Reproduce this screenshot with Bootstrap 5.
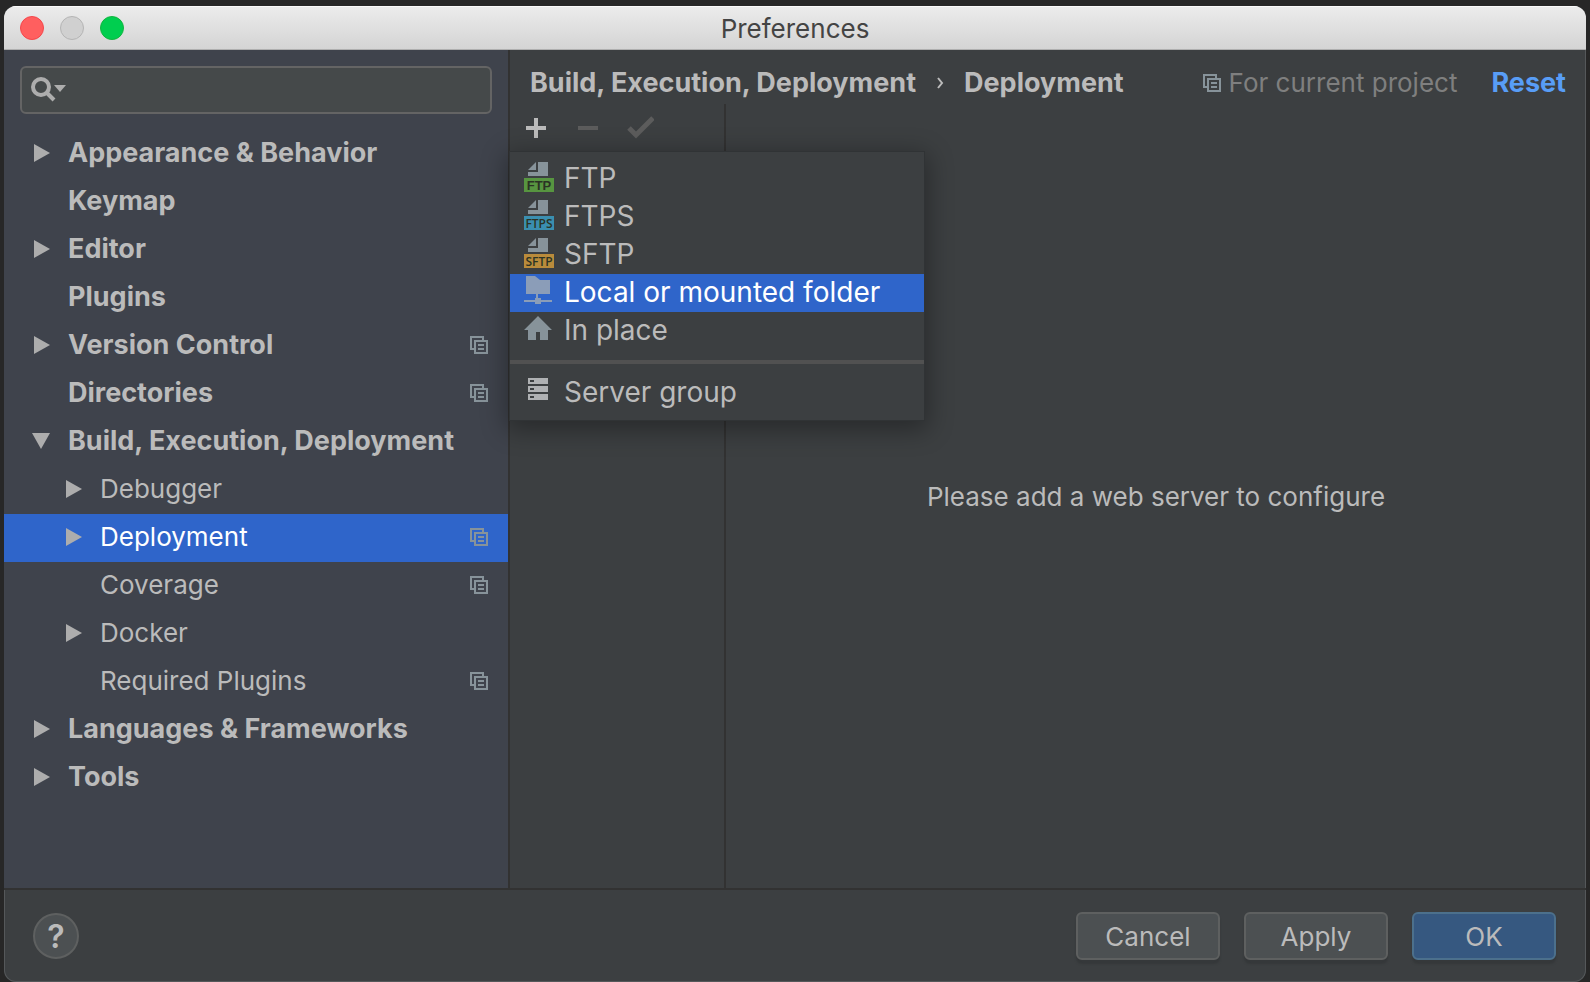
<!DOCTYPE html>
<html lang="en" data-bs-theme="dark">
<head>
<meta charset="utf-8">
<meta name="viewport" content="width=device-width, initial-scale=1">
<title>Preferences</title>
<link href="https://cdn.jsdelivr.net/npm/bootstrap@5.3.0/dist/css/bootstrap.min.css" rel="stylesheet">
<style>
  body { background: #272727; color: #bbb; font-family: Inter, "Liberation Sans", sans-serif; font-size: 26px; line-height: 32px; padding: 6px 4px 0; }
  a { color: inherit; text-decoration: none; }
  svg { display: block; flex: none; }
  .strong { font-size: 27px; font-weight: 700; }
  .window { min-height: calc(100vh - 6px); background: #3c3f41; border-radius: 12px; overflow: hidden; box-shadow: inset 0 0 0 1px #55585a; }
  .titlebar { height: 44px; padding: 0 16px; background: linear-gradient(#ececec, #d4d4d4); border-bottom: 1px solid #afafaf; box-shadow: inset 0 1px #fafafa; color: #444; line-height: 34px; }
  .lights { flex: 1 1 0; gap: 16px; }
  .light { width: 24px; height: 24px; border-radius: 50%; border: 1px solid #b4b4b4; background: #d0d0d0; padding: 0; }
  .light-close { background: #ff5f5f; border-color: #f4474b; }
  .light-zoom { background: #00ce4f; border-color: #12b53f; }
  .heading { padding-top: 2px; }
  .sidebar { width: 506px; background: #3f434c; border-right: 2px solid #323232; }
  .search { margin: 16px; height: 48px; border: 2px solid #646464; border-radius: 6px; background: #45494a; padding-left: 9px; }
  .search input { background: none; border: 0; outline: 0; color: #bbb; min-width: 0; }
  .tree a { height: 48px; padding: 0 20px 2px 24px; }
  .tree .twisty { width: 24px; margin-right: 16px; }
  .tree .child { padding-left: 56px; }
  .tree .active { background: #2f65ca; color: #fff; }
  .crumbs { height: 54px; padding: 12px 20px 0; }
  .muted-note { color: #7f7f7f; gap: 8px; margin-right: 34px; }
  .reset { color: #589df6; }
  .servers { width: 216px; border-right: 2px solid #323232; }
  .tool { background: none; border: 0; padding: 0; width: 52px; height: 48px; display: flex; align-items: center; justify-content: center; }
  .popup { top: 48px; left: 0; width: 414px; padding: 8px 0; background: #3c3f41; box-shadow: 0 0 0 1px #303335, 0 6px 24px 4px #0005; z-index: 5; font-size: 28px; line-height: 36px; }
  .popup button { background: none; border: 0; color: #bbb; padding: 0 14px 2px; height: 38px; gap: 10px; }
  .popup .active { background: #2f65ca; color: #fff; }
  .popup hr { margin: 10px 0; border: 0; height: 4px; background: #515151; opacity: 1; }
  .tag-text { font: 700 13px "Liberation Sans", sans-serif; fill: #2b3324; text-anchor: middle; }
  .tag-long { font: 600 12px "Open Sans", sans-serif; }
  .footer { border-top: 2px solid #323232; padding: 22px 30px 22px 29px; }
  .help { width: 46px; height: 46px; border-radius: 50%; background: #4c5052; border: 2px solid #5e6060; color: #bbb; font-size: 32px; font-weight: 600; padding: 2px 0 0; }
  .action { width: 144px; height: 48px; padding: 2px 0 0; border: 2px solid #5e6060; border-radius: 6px; background: #4c5052; color: #bbb; font-size: 26px; line-height: 32px; box-shadow: 0 4px 2px #35383a; }
  .action-main { background: #365880; border-color: #4c708c; }
  .notice { padding-top: 2px; }
</style>
</head>
<body>
<svg class="d-none">
  <symbol id="right" viewBox="0 0 24 24"><path d="M6 3 22 12 6 21z" fill="#adadad"/></symbol>
  <symbol id="down" viewBox="0 0 24 24"><path d="M4 4h18l-9 16z" fill="#adadad"/></symbol>
  <symbol id="copy" viewBox="0 0 18 18"><path fill="none" stroke="#87939a" stroke-width="2" d="M4 13H1V1h12v3M5 5h12v12H5zM8 9h6M8 13h6"/></symbol>
  <symbol id="doc" viewBox="0 0 20 14"><path fill="#87939a" d="M8 0v8H0zM10 0h10v14H0v-4h10z"/></symbol>
</svg>
<div class="window d-flex flex-column">
  <header class="titlebar d-flex align-items-center">
    <div class="lights d-flex">
      <button class="light light-close" aria-label="Close"></button>
      <button class="light" aria-label="Minimize"></button>
      <button class="light light-zoom" aria-label="Zoom"></button>
    </div>
    <span class="heading">Preferences</span>
    <div class="lights"></div>
  </header>

  <div class="d-flex flex-grow-1">
    <aside class="sidebar flex-shrink-0">
      <div class="search d-flex align-items-center">
        <label for="search"><svg width="36" height="28" viewBox="0 0 36 28"><circle cx="10" cy="11" r="8" fill="none" stroke="#adadad" stroke-width="4"/><path d="m16 17 7 7" stroke="#adadad" stroke-width="4"/><path d="M23 9h12l-6 7z" fill="#adadad"/></svg></label>
        <input id="search" type="text" class="flex-grow-1" aria-label="Search preferences">
      </div>
      <nav class="tree">
        <a href="#" class="strong d-flex align-items-center"><svg class="twisty" height="24"><use href="#right"/></svg><span class="me-auto">Appearance &amp; Behavior</span></a>
        <a href="#" class="strong d-flex align-items-center"><span class="twisty"></span><span class="me-auto">Keymap</span></a>
        <a href="#" class="strong d-flex align-items-center"><svg class="twisty" height="24"><use href="#right"/></svg><span class="me-auto">Editor</span></a>
        <a href="#" class="strong d-flex align-items-center"><span class="twisty"></span><span class="me-auto">Plugins</span></a>
        <a href="#" class="strong d-flex align-items-center"><svg class="twisty" height="24"><use href="#right"/></svg><span class="me-auto">Version Control</span><svg width="18" height="18"><use href="#copy"/></svg></a>
        <a href="#" class="strong d-flex align-items-center"><span class="twisty"></span><span class="me-auto">Directories</span><svg width="18" height="18"><use href="#copy"/></svg></a>
        <a href="#" class="strong d-flex align-items-center"><svg class="twisty" height="24"><use href="#down"/></svg><span class="me-auto">Build, Execution, Deployment</span></a>
        <a href="#" class="child d-flex align-items-center"><svg class="twisty" height="24"><use href="#right"/></svg><span class="me-auto">Debugger</span></a>
        <a href="#" class="child active d-flex align-items-center"><svg class="twisty" height="24"><use href="#right"/></svg><span class="me-auto">Deployment</span><svg width="18" height="18"><use href="#copy"/></svg></a>
        <a href="#" class="child d-flex align-items-center"><span class="twisty"></span><span class="me-auto">Coverage</span><svg width="18" height="18"><use href="#copy"/></svg></a>
        <a href="#" class="child d-flex align-items-center"><svg class="twisty" height="24"><use href="#right"/></svg><span class="me-auto">Docker</span></a>
        <a href="#" class="child d-flex align-items-center"><span class="twisty"></span><span class="me-auto">Required Plugins</span><svg width="18" height="18"><use href="#copy"/></svg></a>
        <a href="#" class="strong d-flex align-items-center"><svg class="twisty" height="24"><use href="#right"/></svg><span class="me-auto">Languages &amp; Frameworks</span></a>
        <a href="#" class="strong d-flex align-items-center"><svg class="twisty" height="24"><use href="#right"/></svg><span class="me-auto">Tools</span></a>
      </nav>
    </aside>

    <main class="flex-grow-1 d-flex flex-column">
      <div class="crumbs d-flex align-items-center text-nowrap">
        <a href="#" class="strong">Build, Execution, Deployment</a>
        <svg class="mx-3" width="16" height="18" viewBox="0 0 16 18"><path d="m6 4 4 5-4 5" fill="none" stroke="#bbb" stroke-width="2"/></svg>
        <span class="strong me-auto">Deployment</span>
        <span class="muted-note d-flex align-items-center"><svg width="18" height="18"><use href="#copy"/></svg>For current project</span>
        <a href="#" class="reset strong">Reset</a>
      </div>
      <div class="d-flex flex-grow-1">
        <section class="servers flex-shrink-0 position-relative">
          <div class="d-flex">
            <button class="tool" aria-label="Add"><svg width="20" height="20"><path d="M10 0v20M0 10h20" stroke="#bbb" stroke-width="4"/></svg></button>
            <button class="tool" aria-label="Remove"><svg width="20" height="20"><path d="M0 10h20" stroke="#5c5c5c" stroke-width="4"/></svg></button>
            <button class="tool" aria-label="Use as default"><svg width="28" height="24" viewBox="0 0 28 24"><path d="m3 12 7 7L27 2" fill="none" stroke="#5c5c5c" stroke-width="5"/></svg></button>
          </div>
          <div class="popup position-absolute" role="menu">
            <button role="menuitem" class="d-flex align-items-center w-100"><svg width="30" height="32"><use href="#doc" x="4" y="0" width="20" height="14"/><path d="M0 16h30v14H0z" fill="#579540"/><text class="tag-text" x="15" y="28">FTP</text></svg>FTP</button>
            <button role="menuitem" class="d-flex align-items-center w-100"><svg width="30" height="32"><use href="#doc" x="4" y="0" width="20" height="14"/><path d="M0 16h30v14H0z" fill="#3a8fb0"/><text class="tag-text tag-long" x="15" y="28">FTPS</text></svg>FTPS</button>
            <button role="menuitem" class="d-flex align-items-center w-100"><svg width="30" height="32"><use href="#doc" x="4" y="0" width="20" height="14"/><path d="M0 16h30v14H0z" fill="#b98b3b"/><text class="tag-text tag-long" x="15" y="28">SFTP</text></svg>SFTP</button>
            <button role="menuitem" class="active d-flex align-items-center w-100"><svg width="30" height="32"><path d="M2 0h9l5 4h10v14H2zM12 18h2v4h3v2h11v2H17v2h-6v-2H0v-2h11v-2h1z" fill="#8b9db8"/></svg>Local or mounted folder</button>
            <button role="menuitem" class="d-flex align-items-center w-100"><svg width="30" height="32"><path d="m14 2 14 14h-4v10h-8v-8h-4v8H4V16H0z" fill="#87939a"/></svg>In place</button>
            <hr>
            <button role="menuitem" class="d-flex align-items-center w-100"><svg width="30" height="32"><path d="M4 2h20v6H4zM4 10h20v6H4zM4 18h20v6H4z" fill="#afb1b3"/><path d="M6 4h4v2H6zM6 12h4v2H6zM6 20h4v2H6z" fill="#3c3f41"/></svg>Server group</button>
          </div>
        </section>
        <section class="notice flex-grow-1 d-flex align-items-center justify-content-center">Please add a web server to configure</section>
      </div>
    </main>
  </div>

  <footer class="footer d-flex align-items-center">
    <button class="help me-auto" aria-label="Help">?</button>
    <div class="d-flex gap-4">
      <button class="btn action">Cancel</button>
      <button class="btn action">Apply</button>
      <button class="btn action action-main">OK</button>
    </div>
  </footer>
</div>
<script src="https://cdn.jsdelivr.net/npm/bootstrap@5.3.0/dist/js/bootstrap.bundle.min.js"></script>
</body>
</html>
